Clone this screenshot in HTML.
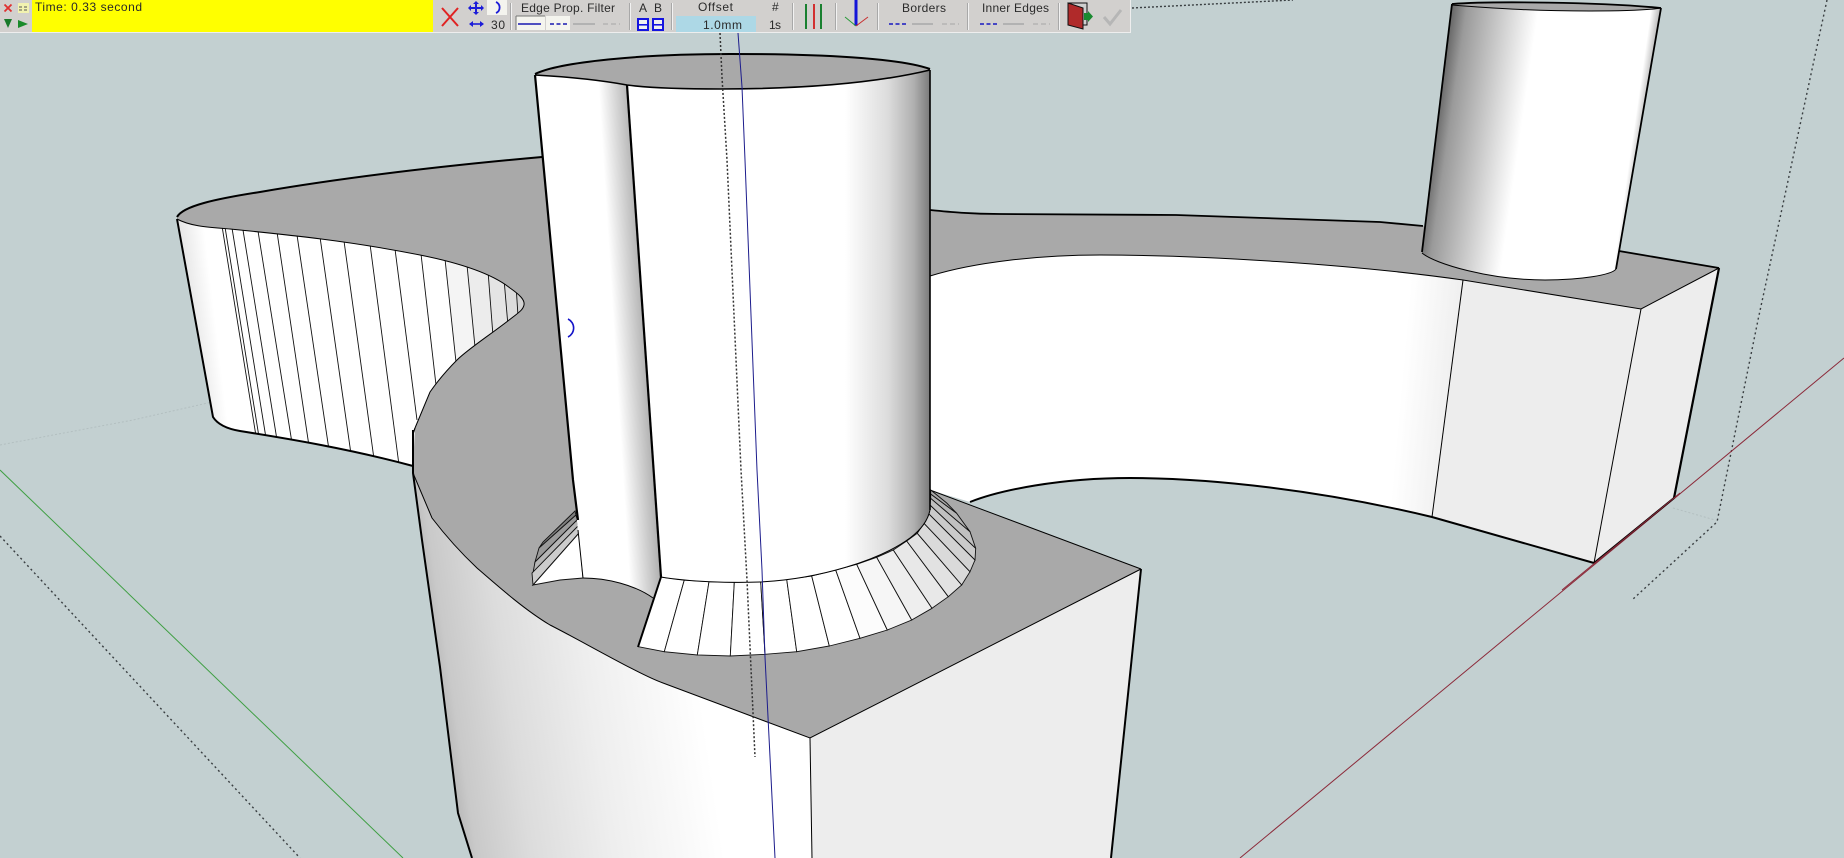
<!DOCTYPE html>
<html><head><meta charset="utf-8"><title>Offset</title>
<style>html,body{margin:0;padding:0;width:1844px;height:858px;overflow:hidden;background:#c3d0d1}svg{display:block}
text{font-family:"Liberation Sans",sans-serif;font-size:12px;fill:#2a2a2a}</style></head>
<body>
<svg width="1844" height="858" viewBox="0 0 1844 858" xmlns="http://www.w3.org/2000/svg">
<defs>
<linearGradient id="cyl1" gradientUnits="userSpaceOnUse" x1="612" y1="300" x2="644" y2="298"><stop offset="0" stop-color="#fff"/><stop offset="1" stop-color="#aeaeae"/></linearGradient>
<linearGradient id="cyl2" gradientUnits="userSpaceOnUse" x1="845" y1="300" x2="931" y2="300"><stop offset="0" stop-color="#fff"/><stop offset=".5" stop-color="#dcdcdc"/><stop offset=".8" stop-color="#b0b0b0"/><stop offset="1" stop-color="#777"/></linearGradient>
<linearGradient id="cyl3" gradientUnits="userSpaceOnUse" x1="1432" y1="130" x2="1640" y2="160"><stop offset="0" stop-color="#5e5e5e"/><stop offset=".08" stop-color="#9a9a9a"/><stop offset=".24" stop-color="#c9c9c9"/><stop offset=".42" stop-color="#fff"/><stop offset=".95" stop-color="#fff"/><stop offset="1" stop-color="#b0b0b0"/></linearGradient>
<linearGradient id="front" gradientUnits="userSpaceOnUse" x1="420" y1="660" x2="690" y2="620"><stop offset="0" stop-color="#a8a8a8"/><stop offset=".1" stop-color="#c9c9c9"/><stop offset=".3" stop-color="#dcdcdc"/><stop offset=".6" stop-color="#eeeeee"/><stop offset="1" stop-color="#ffffff"/></linearGradient>
<linearGradient id="wing" gradientUnits="userSpaceOnUse" x1="190" y1="320" x2="215" y2="317"><stop offset="0" stop-color="#e6e6e6"/><stop offset="1" stop-color="#fff"/></linearGradient>
<linearGradient id="wall" gradientUnits="userSpaceOnUse" x1="1400" y1="400" x2="1455" y2="405"><stop offset="0" stop-color="#fff"/><stop offset="1" stop-color="#eeeeee"/></linearGradient>
<clipPath id="wc"><path d="M177 219 C190 226 205 227 230 229 C290 235 350 241 420 255 C455 262 490 272 510 288 C520 295 525 300 524 305 C523 310 518 313 513 317 C490 335 468 349 457 360 C445 372 437 382 430 392 L415 428 L413 466 C350 449 290 439 240 431 C228 429 218 425 213 417 Z"/></clipPath>
</defs>

<rect width="1844" height="858" fill="#c3d0d1"/>

<!-- ground guides -->
<polyline points="0,445 133,420 212,402" fill="none" stroke="#b3bfc0" stroke-width="1" stroke-dasharray="2 2"/>
<polyline points="1673,508 1715,520" fill="none" stroke="#b3bfc0" stroke-width="1" stroke-dasharray="2 2"/>
<line x1="0" y1="536" x2="300" y2="858" stroke="#3a3f42" stroke-width="1.4" stroke-dasharray="2 3"/>
<line x1="1132" y1="8" x2="1293" y2="0" stroke="#3a3f42" stroke-width="1.4" stroke-dasharray="2 2"/>
<polyline points="1827,0 1758,320 1717,522 1632,600" fill="none" stroke="#3a3f42" stroke-width="1.4" stroke-dasharray="2 3"/>
<line x1="0" y1="470" x2="403" y2="858" stroke="#3f9f43" stroke-width="1"/>
<line x1="1240" y1="858" x2="1844" y2="358" stroke="#8c2a3a" stroke-width="1"/>

<!-- main top gray -->
<path d="M177 218 C183 206 215 199 260 192 C330 180 430 167 542 157 L925 200 L928 490 L1141 569 L810 738 L663 690 L627 670 L550 630 L477 575 L432 525 L413 473 L413 430 L300 300 Z" fill="#a9a9a9"/>
<path d="M177 217 C183 206 215 199 260 192 C330 180 430 167 542 157" fill="none" stroke="#000" stroke-width="2"/>

<!-- left wing -->
<path d="M177 219 C190 226 205 227 230 229 C290 235 350 241 420 255 C455 262 490 272 510 288 C520 295 525 300 524 305 C523 310 518 313 513 317 C490 335 468 349 457 360 C445 372 437 382 430 392 L415 428 L413 466 C350 449 290 439 240 431 C228 429 218 425 213 417 Z" fill="#fff"/>
<g clip-path="url(#wc)">
<polygon points="177,219 220,225 237,433 220,428 213,417" fill="url(#wing)"/>
<polygon points="445,258 467,264 476,345 475,348 456,362" fill="#f4f4f4"/>
<polygon points="467,264 488,270 493,336 475,348" fill="#ececec"/>
<polygon points="488,270 504,278 508,326 493,336" fill="#e4e4e4"/>
<polygon points="504,278 516,284 518,316 508,326" fill="#dcdcdc"/>
<polygon points="516,284 530,303 518,316" fill="#d2d2d2"/>
<g stroke="#111" stroke-width=".9" fill="none">
<line x1="222" y1="226" x2="256" y2="436"/><line x1="225" y1="227" x2="259" y2="437"/><line x1="232" y1="228" x2="266" y2="438"/><line x1="243" y1="230" x2="277" y2="440"/><line x1="258" y1="231" x2="292" y2="443"/><line x1="277" y1="232" x2="309" y2="446"/><line x1="297" y1="235" x2="329" y2="450"/><line x1="320" y1="237" x2="351" y2="454"/><line x1="344" y1="241" x2="374" y2="459"/><line x1="370" y1="244" x2="399" y2="465"/><line x1="395" y1="249" x2="417" y2="420"/><line x1="421" y1="254" x2="436" y2="385"/><line x1="445" y1="259" x2="456" y2="362"/><line x1="467" y1="265" x2="475" y2="347"/><line x1="488" y1="271" x2="493" y2="336"/><line x1="504" y1="279" x2="508" y2="326"/><line x1="516" y1="285" x2="518" y2="316"/>
</g>
</g>
<path d="M177 219 C190 226 205 227 230 229 C290 235 350 241 420 255 C455 262 490 272 510 288 C520 295 525 300 524 305 C523 310 518 313 513 317 C490 335 468 349 457 360 C445 372 437 382 430 392 L415 428" fill="none" stroke="#000" stroke-width="1"/>
<path d="M177 219 L213 417 C218 425 228 429 240 431 C290 439 350 449 413 466" fill="none" stroke="#000" stroke-width="2"/>
<line x1="415" y1="428" x2="413" y2="434" stroke="#000" stroke-width="1.2"/>

<!-- right wall -->
<path d="M930 276 C975 262 1040 255 1100 255 C1200 255 1350 264 1463 280 L1432 517 C1320 490 1210 478 1130 478 C1060 478 1000 490 970 502 L930 490 Z" fill="url(#wall)"/>
<polygon points="1463,280 1641,309 1594,563 1432,517" fill="#ededed"/>
<polygon points="1641,309 1719,268 1674,498 1594,563" fill="#ededed"/>
<path d="M930 210 C950 212 970 214 1000 214 L1176 215 L1380 222 L1423 226 L1619 251 L1719 268 L1641 309 L1463 280 C1350 264 1200 255 1100 255 C1040 255 975 262 930 276 Z" fill="#a9a9a9"/>

<g fill="none" stroke="#000">
<path d="M930 210 C950 212 970 214 1000 214 L1176 215 L1380 222 L1423 226" stroke-width="1.8"/>
<polyline points="1619,251 1719,268" stroke-width="1.8"/>
<path d="M930 276 C975 262 1040 255 1100 255 C1200 255 1350 264 1463 280 L1641 309 L1719 268" stroke-width="1"/>
<line x1="1463" y1="280" x2="1432" y2="517" stroke-width="1"/>
<line x1="1641" y1="309" x2="1594" y2="563" stroke-width="1"/>
<line x1="1719" y1="268" x2="1674" y2="498" stroke-width="2.2"/>
<path d="M970 502 C1000 490 1060 478 1130 478 C1210 478 1320 490 1432 517 L1594 563" stroke-width="2"/>
<line x1="1594" y1="563" x2="1674" y2="498" stroke-width="2"/>
</g>
<line x1="1562" y1="590" x2="1680" y2="493" stroke="#8c2a3a" stroke-width="1"/>

<!-- front block -->
<path d="M413 473 L432 518 C445 535 460 552 477 568 C500 588 525 610 550 625 C580 640 640 675 663 683 L810 738 L812 858 L472 858 L458 813 L440 667 L422 540 Z" fill="url(#front)"/>
<polygon points="810,738 1141,569 1111,858 812,858" fill="#ededed"/>
<path d="M930 490 L1141 569" fill="none" stroke="#000" stroke-width="1"/>
<g fill="none" stroke="#000">
<path d="M413 473 L432 518 C445 535 460 552 477 568 C500 588 525 610 550 625 C580 640 640 675 663 683 L810 738 L1141 569" stroke-width="1"/>
<polyline points="413,430 413,473 422,540 440,667 458,813 472,858" stroke-width="2"/>
<line x1="1141" y1="569" x2="1111" y2="858" stroke-width="2"/>
<line x1="810" y1="738" x2="812" y2="858" stroke-width="1"/>
</g>

<!-- cone faces -->
<g stroke="#111" stroke-width=".9">
<polygon points="661,577 684.3,580 664.3,651.7 638.3,646.7" fill="#fff"/>
<polygon points="684.3,580 709,581.7 697.3,655 664.3,651.7" fill="#fff"/>
<polygon points="709,581.7 734.3,582.3 730.3,656 697.3,655" fill="#fff"/>
<polygon points="734.3,582.3 760.7,581.7 765,654.3 730.3,656" fill="#fff"/>
<polygon points="760.7,581.7 786.7,579.3 796.7,651.7 765,654.3" fill="#fff"/>
<polygon points="786.7,579.3 811.7,576 829.3,646 796.7,651.7" fill="#fff"/>
<polygon points="811.7,576 835.7,570 860,638.3 829.3,646" fill="#fff"/>
<polygon points="835.7,570 856.7,564.3 887.3,630 860,638.3" fill="#fcfcfc"/>
<polygon points="856.7,564.3 876.7,557.3 911.7,620 887.3,630" fill="#f6f6f6"/>
<polygon points="876.7,557.3 893.3,550 932,608.3 911.7,620" fill="#eeeeee"/>
<polygon points="893.3,550 906.7,541 948.3,596.7 932,608.3" fill="#e8e8e8"/>
<polygon points="906.7,541 917.3,533.3 961.7,585 948.3,596.7" fill="#e2e2e2"/>
<polygon points="917.3,533.3 924,523.3 970,571.7 961.7,585" fill="#dadada"/>
<polygon points="924,523.3 928.3,513.3 975,560 970,571.7" fill="#d2d2d2"/>
<polygon points="928.3,513.3 930,505 975.7,548.3 975,560" fill="#cacaca"/>
<polygon points="930,505 930.7,498.3 970,531.7 975.7,548.3" fill="#c0c0c0"/>
<polygon points="930.7,498.3 930.7,494 956.7,513.3 970,531.7" fill="#b4b4b4"/>
<polygon points="930.7,494 930.7,490 946.7,503 956.7,513.3" fill="#a9a9a9"/>
</g>

<!-- left cone piece -->
<g stroke="#111" stroke-width=".9">
<polygon points="575,511 576,515 539,548 543,542" fill="#7e7e7e"/>
<polygon points="576,515 577,520 535,562 539,548" fill="#9a9a9a"/>
<polygon points="577,520 578,526 533,573 535,562" fill="#b6b6b6"/>
<polygon points="578,526 579,533 533,585 532,573" fill="#cccccc"/>
</g>
<polygon points="533,585 579,533 583,578 560,580" fill="#fff" stroke="#111" stroke-width="1"/>

<!-- column 1 -->
<path d="M535 75 C570 77 600 80 627 85 L661 577 L653 598 C635 585 607 578 583 578 L578 532 L573 480 L543 160 Z" fill="url(#cyl1)"/>
<path d="M583 578 C607 578 635 585 653 598" fill="none" stroke="#000" stroke-width="1"/>
<polyline points="535,75 543,160 573,480 578,520" fill="none" stroke="#000" stroke-width="2.2"/>
<line x1="578" y1="530" x2="583" y2="578" stroke="#000" stroke-width="1"/>

<!-- column 2 -->
<path d="M627 85 C650 88 680 89 720 89 C810 89 880 82 930 70 L930 510 C928 520 922 529 910 538 C880 560 820 579 760 582 C730 583 690 582 661 577 Z" fill="url(#cyl2)"/>
<path d="M661 577 C690 582 730 583 760 582 C820 579 880 560 910 538 C922 529 928 520 930 510" fill="none" stroke="#000" stroke-width="1"/>
<line x1="930" y1="70" x2="930" y2="510" stroke="#000" stroke-width="1.6"/>
<line x1="627" y1="85" x2="661" y2="577" stroke="#000" stroke-width="2.2"/>
<line x1="661" y1="577" x2="638" y2="647" stroke="#000" stroke-width="2"/>

<!-- column top ellipse -->
<path d="M535 73 C560 62 640 54 730 54 C820 54 900 58 930 69 L930 70 C880 82 810 89 720 89 C680 89 650 88 627 85 C600 80 570 77 537 75 Z" fill="#a9a9a9"/>
<path d="M535 74 C560 62 640 54 730 54 C820 54 900 58 930 69" fill="none" stroke="#000" stroke-width="2"/>
<path d="M930 70 C880 82 810 89 720 89 C680 89 650 88 627 85 C600 80 570 77 535 75" fill="none" stroke="#000" stroke-width="1.6"/>

<!-- upper right cylinder -->
<path d="M1452 4 C1490 1 1600 2 1661 8 L1616 269 C1612 275 1580 280 1545 280 C1490 280 1435 264 1422 253 Z" fill="url(#cyl3)"/>
<path d="M1452 4 C1490 1 1600 2 1661 8 C1650 10 1620 11 1590 11 C1530 11 1490 8 1452 5 Z" fill="#a9a9a9"/>
<g fill="none" stroke="#000">
<path d="M1452 4 C1490 1 1600 2 1661 8" stroke-width="1.8"/>
<path d="M1452 5 C1490 8 1530 11 1590 11 C1620 11 1650 10 1661 8" stroke-width="1"/>
<line x1="1452" y1="4" x2="1422" y2="252" stroke-width="1.8"/>
<line x1="1661" y1="8" x2="1616" y2="269" stroke-width="1.8"/>
<path d="M1422 253 C1435 264 1490 280 1545 280 C1580 280 1612 275 1616 269" stroke-width="1"/>
</g>

<!-- axes through model -->
<polyline points="720,33 722,77 727,160 741,470 747,580 755,757" fill="none" stroke="#333" stroke-width="1.5" stroke-dasharray="2 2"/>
<polyline points="738,33 742,87 745,160 757,470 762,570 765,657 770,757 775,858" fill="none" stroke="#1c1c8c" stroke-width="1"/>
<path d="M568 319 A10 10 0 0 1 568 337" fill="none" stroke="#1414c8" stroke-width="1.6"/>

<!-- toolbar -->
<rect x="0" y="0" width="1130" height="33" fill="#d2d0ce"/>
<rect x="0" y="32" width="1130" height="1" fill="#eeeeee"/>
<rect x="1130" y="0" width="1" height="33" fill="#eeeeee"/>
<rect x="32" y="0" width="401" height="32" fill="#ffff00"/>
<text x="35" y="11" textLength="107" lengthAdjust="spacing">Time: 0.33 second</text>
<path d="M4.5 4.5 L11.5 11.5 M11.5 4.5 L4.5 11.5" stroke="#e03030" stroke-width="1.8" fill="none"/>
<rect x="18" y="3" width="11" height="10" fill="#f2f2b0"/>
<path d="M19 7 h3 M24 7 h3 M19 10 h3 M24 10 h3" stroke="#555" stroke-width="1"/>
<polygon points="4,19 12,19 8,28" fill="#1a7a2a"/>
<polygon points="18,20 28,24 18,28" fill="#1a8a2a"/>

<path d="M442 8 L458 26 M458 8 L442 26" stroke="#e02222" stroke-width="2" fill="none"/>
<path d="M476 2 L476 14 M469 8 L483 8" stroke="#1c1cd8" stroke-width="2"/>
<polygon points="476,1 473,4 479,4" fill="#1c1cd8"/><polygon points="476,15 473,12 479,12" fill="#1c1cd8"/>
<polygon points="468,8 471,5 471,11" fill="#1c1cd8"/><polygon points="484,8 481,5 481,11" fill="#1c1cd8"/>
<rect x="487" y="0" width="20" height="15" fill="#f4f4ee"/>
<path d="M496 2 A6 6 0 0 1 496 13" fill="none" stroke="#1c1cd8" stroke-width="1.8"/>
<path d="M470 24 H483" stroke="#1c1cd8" stroke-width="1.6"/>
<polygon points="469,24 473,21 473,27" fill="#1c1cd8"/><polygon points="484,24 480,21 480,27" fill="#1c1cd8"/>
<text x="491" y="29" textLength="14" lengthAdjust="spacing">30</text>

<g fill="#a8a8a8"><rect x="510" y="3" width="1" height="27"/><rect x="629" y="3" width="1" height="27"/><rect x="671" y="3" width="1" height="27"/><rect x="792" y="3" width="1" height="27"/><rect x="835" y="3" width="1" height="27"/><rect x="877" y="3" width="1" height="27"/><rect x="967" y="3" width="1" height="27"/><rect x="1058" y="3" width="1" height="27"/></g>
<g fill="#f2f2f2"><rect x="511" y="3" width="1" height="27"/><rect x="630" y="3" width="1" height="27"/><rect x="672" y="3" width="1" height="27"/><rect x="793" y="3" width="1" height="27"/><rect x="836" y="3" width="1" height="27"/><rect x="878" y="3" width="1" height="27"/><rect x="968" y="3" width="1" height="27"/><rect x="1059" y="3" width="1" height="27"/></g>

<text x="521" y="12" textLength="94" lengthAdjust="spacing">Edge Prop. Filter</text>
<rect x="516" y="16" width="29" height="14" fill="#f4f4ee"/>
<rect x="546" y="16" width="24" height="14" fill="#f4f4ee"/>
<path d="M516 16 V30 M516 16 H545" stroke="#777" stroke-width="1" fill="none"/>
<path d="M518 24 H541" stroke="#1818b0" stroke-width="1.6"/>
<path d="M550 24 H567" stroke="#1818b0" stroke-width="1.6" stroke-dasharray="4 2.5"/>
<path d="M573 24 H595" stroke="#a8a8a8" stroke-width="1.6"/>
<path d="M603 24 H620" stroke="#b4b4b4" stroke-width="1.6" stroke-dasharray="5 3"/>

<text x="639" y="12">A</text><text x="654" y="12">B</text>
<rect x="638" y="19" width="10" height="11" fill="#f0f0f0" stroke="#1414e0" stroke-width="2"/>
<rect x="638" y="24" width="10" height="1.600" fill="#1414e0"/>
<rect x="653" y="19" width="10" height="11" fill="#f0f0f0" stroke="#1414e0" stroke-width="2"/>
<rect x="653" y="24" width="10" height="1.600" fill="#1414e0"/>

<text x="698" y="11" textLength="35" lengthAdjust="spacing">Offset</text>
<rect x="676" y="16" width="80" height="16" fill="#add8e6"/>
<text x="703" y="29" textLength="39" lengthAdjust="spacing">1.0mm</text>
<text x="772" y="11">#</text>
<text x="769" y="29" textLength="12" lengthAdjust="spacing">1s</text>

<rect x="805" y="4" width="2" height="25" fill="#1a8030"/>
<rect x="813" y="4" width="2" height="25" fill="#d23030"/>
<rect x="820" y="4" width="2" height="25" fill="#1a8030"/>

<rect x="854.500" y="0" width="3" height="26" fill="#1414d8"/>
<line x1="845" y1="17" x2="856" y2="26" stroke="#2a9a3a" stroke-width="1"/>
<line x1="868" y1="17" x2="856" y2="26" stroke="#c83030" stroke-width="1"/>

<text x="902" y="12" textLength="44" lengthAdjust="spacing">Borders</text>
<path d="M889 24 H906" stroke="#1818c0" stroke-width="1.6" stroke-dasharray="4 2.5"/>
<path d="M912 24 H933" stroke="#a8a8a8" stroke-width="1.6"/>
<path d="M942 24 H959" stroke="#b4b4b4" stroke-width="1.6" stroke-dasharray="5 3"/>
<text x="982" y="12" textLength="67" lengthAdjust="spacing">Inner Edges</text>
<path d="M980 24 H997" stroke="#1818c0" stroke-width="1.6" stroke-dasharray="4 2.5"/>
<path d="M1003 24 H1024" stroke="#a8a8a8" stroke-width="1.6"/>
<path d="M1033 24 H1050" stroke="#b4b4b4" stroke-width="1.6" stroke-dasharray="5 3"/>

<rect x="1068" y="3" width="19" height="22" fill="#cfcfcf" stroke="#111" stroke-width="1"/>
<polygon points="1068,3 1083,8 1083,29 1068,25" fill="#b02a2a" stroke="#111" stroke-width="1"/>
<polygon points="1084,13 1088,13 1088,11 1093,16.500 1088,22 1088,20 1084,20" fill="#1a8a30"/>
<path d="M1104 17 L1110 24 L1121 10" fill="none" stroke="#b6b6b6" stroke-width="3"/>
</svg>
</body></html>
